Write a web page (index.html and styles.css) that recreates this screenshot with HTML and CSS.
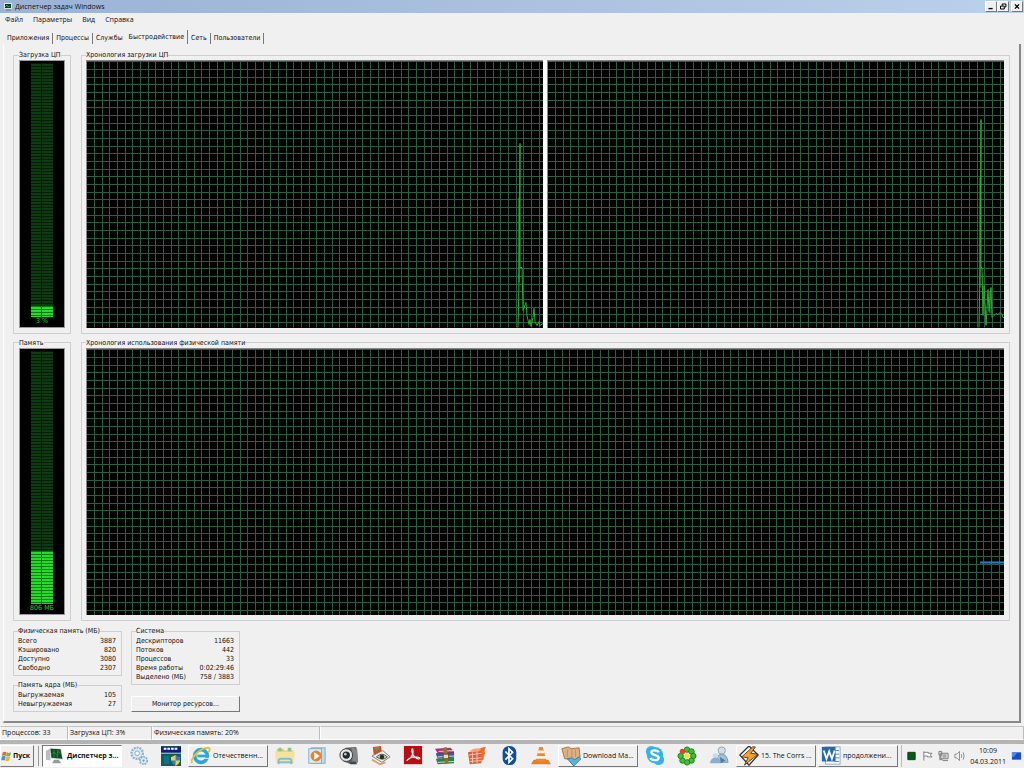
FILE: index.html
```
<!DOCTYPE html>
<html lang="ru">
<head>
	<meta charset="UTF-8">
	<title>Диспетчер задач Windows</title>
	<link rel="stylesheet" href="styles.css">
</head>
<body>

	<header class="titleBar">
		<svg class="appIcon" viewBox="0 0 8 8"><rect width="8" height="6" fill="#dde5e0"/><rect x="1" y="1" width="6" height="4" fill="#0d3b1a"/><path d="M1 4l2-2 1 2 2-1" stroke="#3c6" fill="none" stroke-width=".7"/><path d="M2 7h5" stroke="#777"/></svg>
		<h1>Диспетчер задач Windows</h1>
		<div class="winBtns">
			<button aria-label="Свернуть"><svg viewBox="0 0 12 10"><path d="M3 7.5h5" stroke="#000" stroke-width="1.6"/></svg></button>
			<button aria-label="Восстановить"><svg viewBox="0 0 12 10"><path d="M5 4V2h4.500v3.500H8M3 4.500h4.500V8H3z" fill="none" stroke="#000" stroke-width="1.200"/></svg></button>
			<button class="closeBtn" aria-label="Закрыть"><svg viewBox="0 0 12 10"><path d="M3.500 2.500l5 5m0-5l-5 5" stroke="#000" stroke-width="1.500"/></svg></button>
		</div>
	</header>

	<nav class="menu">
		<a href="#">Файл</a>
		<a href="#">Параметры</a>
		<a href="#">Вид</a>
		<a href="#">Справка</a>
	</nav>

	<nav class="tabs">
		<a href="#">Приложения</a>
		<a href="#">Процессы</a>
		<a href="#">Службы</a>
		<a href="#" class="active">Быстродействие</a>
		<a href="#">Сеть</a>
		<a href="#">Пользователи</a>
	</nav>

	<main class="panel">
		<svg class="defs" width="0" height="0">
			<defs>
				<pattern id="grid" width="23" height="23" patternUnits="userSpaceOnUse">
					<path d="M7.500 0v23M15.500 0v23M22.500 0v23M0 .5h23M0 8.500h23M0 16.500h23" stroke="#286044" fill="none"/>
				</pattern>
			</defs>
		</svg>

		<div class="row">
			<fieldset class="gaugeBox">
				<legend>Загрузка ЦП</legend>
				<div class="gauge">
					<div class="scale"><div class="level" style="height: 4%"></div></div>
					<span>3 %</span>
				</div>
			</fieldset>
			<fieldset class="chartBox">
				<legend>Хронология загрузки ЦП</legend>
				<div class="charts">
					<svg class="chart">
						<rect width="100%" height="100%" fill="url(#grid)"/>
						<svg x="100%" y="100%" overflow="visible">
							<path class="cpu" d="M-25 0L-24-45-23-184-23-60-21-60-20-17-17-25-16-12-14-3-13-8-12-1-10-10-9-19-8-6-6-2-4-6-3-2 0-4"/>
							<path class="cpu" d="M-24-45V-130"/>
						</svg>
					</svg>
					<svg class="chart">
						<rect width="100%" height="100%" fill="url(#grid)"/>
						<svg x="100%" y="100%" overflow="visible">
							<path class="cpu" d="M-25 0L-24-60-23-208-23-60-22-60-21-12-20-42-19-25-18-2-16-38-15-16-13-40-12-10-10-12-8-14-6-13-4-15-2-13-1-10 0-10"/>
							<path class="cpu" d="M-24-40V-150M-14-14V-36"/>
						</svg>
					</svg>
				</div>
			</fieldset>
		</div>

		<div class="row">
			<fieldset class="gaugeBox">
				<legend>Память</legend>
				<div class="gauge">
					<div class="scale"><div class="level" style="height: 21%"></div></div>
					<span>806 МБ</span>
				</div>
			</fieldset>
			<fieldset class="chartBox">
				<legend>Хронология использования физической памяти</legend>
				<div class="charts">
					<svg class="chart">
						<rect width="100%" height="100%" fill="url(#grid)"/>
						<svg x="100%" y="100%" overflow="visible">
							<path d="M-24-53H0" stroke="#2c7fd0" stroke-width="2"/>
						</svg>
					</svg>
				</div>
			</fieldset>
		</div>

		<div class="stats">
			<div class="col">
				<fieldset>
					<legend>Физическая память (МБ)</legend>
					<table>
						<tr><th>Всего</th><td>3887</td></tr>
						<tr><th>Кэшировано</th><td>820</td></tr>
						<tr><th>Доступно</th><td>3080</td></tr>
						<tr><th>Свободно</th><td>2307</td></tr>
					</table>
				</fieldset>
				<fieldset>
					<legend>Память ядра (МБ)</legend>
					<table>
						<tr><th>Выгружаемая</th><td>105</td></tr>
						<tr><th>Невыгружаемая</th><td>27</td></tr>
					</table>
				</fieldset>
			</div>
			<div class="col">
				<fieldset>
					<legend>Система</legend>
					<table>
						<tr><th>Дескрипторов</th><td>11663</td></tr>
						<tr><th>Потоков</th><td>442</td></tr>
						<tr><th>Процессов</th><td>33</td></tr>
						<tr><th>Время работы</th><td>0:02:29:46</td></tr>
						<tr><th>Выделено (МБ)</th><td>758 / 3883</td></tr>
					</table>
				</fieldset>
				<button class="monitor">Монитор ресурсов...</button>
			</div>
		</div>
	</main>

	<footer class="status">
		<span class="s1">Процессов: 33</span>
		<span class="s2">Загрузка ЦП: 3%</span>
		<span class="s3">Физическая память: 20%</span>
		<span class="s4"></span>
	</footer>

	<div class="taskbar">
		<button class="start">
			<svg viewBox="0 0 12 12"><path d="M2 2q2-1.500 4 0L5 6Q3 4.500 1 6z" fill="#e8632c"/><path d="M6.500 2q2 1.500 4.500 0L10 6q-2 1.200-4.500 0z" fill="#7cb342"/><path d="M1 6.500q2-1.500 4 0L4 11q-2-1.500-4 0z" fill="#4a90d9"/><path d="M5.500 6.500q2 1.500 4.500 0L9 11q-2 1.500-4.500 0z" fill="#f5b81f"/></svg>
			Пуск
		</button>
		<i class="sep"></i>

		<button class="task active">
			<svg viewBox="0 0 22 22"><path d="M1 5l5-2v13l-5-1z" fill="#b9bdbb"/><path d="M5 2l13 1 2 12-13-1z" fill="#d5dad7"/><path d="M6 3l11 .5 2 10.500L7 13z" fill="#0d4a20"/><path d="M7 9l3-2 3 3 2-4 3 3M10 4v9M14 4v9" stroke="#2f8c48" fill="none"/><path d="M10 15h5l3 4H8z" fill="#999"/></svg>
			<span>Диспетчер з...</span>
		</button>
		<a href="#" class="quick" aria-label="Службы">
			<svg viewBox="0 0 22 22"><circle cx="9" cy="8" r="6" fill="#e8f2f8" stroke="#8cb3ce" stroke-width="3" stroke-dasharray="2 1"/><circle cx="9" cy="8" r="5" fill="#d9e9f3"/><circle cx="9" cy="8" r="2.500" fill="#fff" stroke="#7fa6c3"/><circle cx="16" cy="16" r="4" fill="#dcebf4" stroke="#8cabc1" stroke-width="2" stroke-dasharray="2 1"/><circle cx="16" cy="16" r="1.200" fill="#6f98b8"/></svg>
		</a>
		<a href="#" class="quick" aria-label="Конфигурация">
			<svg viewBox="0 0 22 22"><path d="M0 0h22v22H0z" fill="#17595a"/><path d="M0 1h22v6H0z" fill="#17178c"/><path d="M3 3h16" stroke="#fff" stroke-width="2" stroke-dasharray="3 1"/><path d="M0 8h22" stroke="#c0c8e0"/><path d="M3 11h6v9H3z" fill="#0b7480"/><path d="M16 10q2 2 5 2v4q-1 4-5 6-4-2-5-6v-4q3 0 5-2z" fill="#3777c9"/><path d="M16 10v6h5q-1 4-5 6v-6h-5v-4q3 0 5-2z" fill="#efd049"/></svg>
		</a>
		<button class="task">
			<svg viewBox="0 0 22 22"><circle cx="11" cy="11" r="7" fill="none" stroke="#29a7df" stroke-width="4"/><path d="M7 11h12" stroke="#29a7df" stroke-width="3"/><path d="M13 14h9v-1h-9z" fill="#f3f3f3"/><path d="M1 19C-1 13 10 2 19 2c3 0 1 4 0 5" fill="none" stroke="#edbd34" stroke-width="2"/></svg>
			<span>Отечественн...</span>
		</button>
		<a href="#" class="quick" aria-label="Проводник">
			<svg viewBox="0 0 22 22"><path d="M2 3h7l1 2h10v14H2z" fill="#e2c468"/><path d="M4 2h3v5H4zM14 2h4v5h-4z" fill="#8ac48f"/><path d="M0 6h22l-1 11H1z" fill="#f5e39c"/><path d="M4 20v-4q0-2 3-2h8q3 0 3 2v4M4 18h14" fill="none" stroke="#80bce2" stroke-width="2"/></svg>
		</a>
		<a href="#" class="quick" aria-label="Проигрыватель">
			<svg viewBox="0 0 22 22"><rect x="5" y="2" width="15" height="17" fill="#b8dceb" stroke="#7ab1cc"/><rect x="2" y="3" width="14" height="16" fill="#d7edf5" stroke="#78abc4"/><circle cx="10" cy="11" r="6" fill="#ed812b"/><path d="M8 7l6 4-6 4z" fill="#fff"/></svg>
		</a>
		<a href="#" class="quick" aria-label="Камера">
			<svg viewBox="0 0 22 22"><path d="M7 2l12-1 2 17-8 2-8-3z" fill="#606468"/><path d="M14 2l6 1 1 14-6 2z" fill="#83878a"/><circle cx="8" cy="10" r="7" fill="#e3e5e7" stroke="#333"/><circle cx="8" cy="10" r="4" fill="#24272a"/><circle cx="7" cy="9" r="1.500" fill="#b8c4ce"/><path d="M11 18l7-1 2 3h-7z" fill="#444"/></svg>
		</a>
		<a href="#" class="quick" aria-label="Просмотр">
			<svg viewBox="0 0 22 22"><path d="M2 1l9-1 1 8-9 2z" fill="#d64826"/><path d="M3 1l3 5 4-5z" fill="#66994f"/><path d="M1 11l12-6 8 7-9 6z" fill="#efefea" stroke="#777"/><path d="M6 12q6-6 12 0-5 5-12 0z" fill="#c4cdbf" stroke="#4c5448"/><circle cx="12" cy="12" r="2.500" fill="#26331f"/><path d="M1 15l9 5 6-2" fill="none" stroke="#d9a06c" stroke-width="2"/></svg>
		</a>
		<a href="#" class="quick" aria-label="Adobe Reader">
			<svg viewBox="0 0 22 22"><rect x="1" y="0" width="20" height="20" fill="#b80f14"/><path d="M4 16c5-2 8-8 7-12-1-2-2 0-1 3 1 4 5 8 8 7 2-1-1-2-5-2-3 0-7 2-9 4z" fill="none" stroke="#fff" stroke-width="1.200"/></svg>
		</a>
		<a href="#" class="quick" aria-label="WinRAR">
			<svg viewBox="0 0 22 22"><path d="M0 3l17-1 4 4-18 2z" fill="#a43271"/><path d="M1 8l20-2v4L3 12z" fill="#8a2d63"/><path d="M1 9l20-1v5L3 14z" fill="#315db0"/><path d="M1 14l20-1v6L3 20z" fill="#298048"/><path d="M3 12l18-1M3 18l18-1M4 6l17-1" stroke="#e8e3cf"/><path d="M9 2l4-1 2 18-4 1z" fill="#8f7436"/><path d="M9 9h6v5H9z" fill="#e9dfae" stroke="#5f4820"/></svg>
		</a>
		<a href="#" class="quick" aria-label="Брандмауэр">
			<svg viewBox="0 0 22 22"><path d="M10 6Q14 1 21 1q-3 4-1 7-2 3-2 7l-4 3z" fill="#f26b20"/><path d="M1 7l14-2 1 14-13 1z" fill="#d95f3f"/><path d="M2 10l14-2M3 14l13-1M3 17l13-1M6 7v12M11 6v13" stroke="#f8cbb5"/><path d="M2 6q6-5 14-3l-3 3z" fill="#f6a37b"/></svg>
		</a>
		<a href="#" class="quick" aria-label="Bluetooth">
			<svg viewBox="0 0 22 22"><rect x="4" y="0" width="15" height="21" rx="7" fill="#124e90"/><path d="M7 6l8 8-4 4V3l4 4-8 8" fill="none" stroke="#fff" stroke-width="1.800"/></svg>
		</a>
		<a href="#" class="quick" aria-label="VLC">
			<svg viewBox="0 0 22 22"><path d="M3 15h16l3 5H0z" fill="#e67f20"/><path d="M9 1h4l4 15q-6 3-12 0z" fill="#f08a27"/><path d="M8 5h6l1 3H7zM6 11h10l1 3H5z" fill="#f6f2eb"/></svg>
		</a>
		<button class="task">
			<svg viewBox="0 0 22 22"><path d="M1 3l7-2 3 2 9-1 1 10-5 3-12-1z" fill="#ddb083" stroke="#a5713f"/><path d="M7 4v8M12 4v8M16 4v8" stroke="#bf8c5c"/><path d="M7 14l5-1 3 2 5-3 2 2-8 8z" fill="#58b5df" stroke="#307ca8"/></svg>
			<span>Download Ma...</span>
		</button>
		<a href="#" class="quick" aria-label="Skype">
			<svg viewBox="0 0 22 22"><circle cx="7" cy="6" r="6" fill="#35b2e9"/><circle cx="15" cy="15" r="6" fill="#35b2e9"/><circle cx="11" cy="10" r="9" fill="#35b2e9"/><path d="M15 7c-1-3-8-3-8 0 0 4 8 2 8 6 0 4-8 3-9 0" fill="none" stroke="#fff" stroke-width="2.500"/></svg>
		</a>
		<a href="#" class="quick" aria-label="ICQ">
			<svg viewBox="0 0 22 22"><g fill="#43bd35" stroke="#16811a"><circle cx="11" cy="4" r="3"/><circle cx="16" cy="6" r="3"/><circle cx="18" cy="11" r="3"/><circle cx="16" cy="16" r="3"/><circle cx="11" cy="18" r="3"/><circle cx="6" cy="16" r="3"/><circle cx="4" cy="11" r="3"/></g><circle cx="6" cy="6" r="3" fill="#da4935"/><circle cx="11" cy="11" r="3" fill="#f4df48"/></svg>
		</a>
		<a href="#" class="quick" aria-label="Контакты">
			<svg viewBox="0 0 22 22"><circle cx="14" cy="5" r="4" fill="#d2dfe7" stroke="#8da3b1"/><path d="M8 18q0-9 6-9t7 9z" fill="#a4bfd1" stroke="#7797ab"/><circle cx="7" cy="11" r="3" fill="#c6dae7"/><path d="M1 19q1-6 6-6t6 6z" fill="#89afca"/><path d="M12 12l6 4-5 3z" fill="#477eaf"/></svg>
		</a>
		<button class="task">
			<svg viewBox="0 0 22 22"><path d="M11 0l10 10-10 11L1 10z" fill="#fff" stroke="#333" stroke-width="1.500"/><path d="M15 1L3 12l7 1-4 8L21 9l-8-1 5-7z" fill="#f3a12e" stroke="#52361c"/></svg>
			<span>15. The Corrs ...</span>
		</button>
		<button class="task">
			<svg viewBox="0 0 22 22"><rect x="5" y="1" width="16" height="19" fill="#f7fafd" stroke="#8da9c8"/><path d="M15 5h5M15 9h5M15 13h5M15 17h5" stroke="#5080b4"/><path d="M1 1h15v16H1z" fill="#2767ae"/><path d="M3 5l3 9 3-8 3 8 3-9" fill="none" stroke="#fff" stroke-width="2"/></svg>
			<span>продолжени...</span>
		</button>

		<div class="tray">
			<svg viewBox="0 0 12 12"><path d="M2 2h8v8H2z" fill="#075916" stroke="#0b3812"/></svg>
			<svg viewBox="0 0 12 12"><path d="M2 1v10M2 2h5v1h4L9 5l2 2H6V6H2" fill="#fff" stroke="#777"/></svg>
			<svg viewBox="0 0 12 12"><path d="M3 3h8v6H3zM5 11h6M1 1h3v4H1zM2 5v5h3" fill="#ddd" stroke="#777"/><path d="M5 5h4M5 7h4" stroke="#777"/></svg>
			<svg viewBox="0 0 12 12"><path d="M1 4h2l3-3v10L3 8H1zM8 4q1 2 0 4M10 2q2 4 0 8" fill="none" stroke="#888"/></svg>
			<time datetime="2011-03-04T10:09">10:09<br>04.03.2011</time>
			<svg viewBox="0 0 12 12"><path d="M1 2h10v8H1z" fill="#1a4dc4"/><path d="M1 2h6L3 7H1z" fill="#5488e8"/></svg>
		</div>
	</div>

</body>
</html>
```

FILE: styles.css
```
*{
	margin :0;
	padding :0;
	box-sizing: border-box;
}
body{
	display: flex;
	flex-direction: column;
	min-height: 100vh;
	background: #f0f0f0;
	color :#111;
	font: 7px/9px "DejaVu Sans Condensed", "DejaVu Sans", sans-serif;
}
a{
	color :inherit;
	text-decoration: none;
}
button{
	font: inherit;
	color :inherit;
	background: #f0f0f0;
	border: 1px solid;
	border-color: #fff #777 #777 #fff;
}
svg{
	display: block;
	flex: none;
}
.defs{
	position: absolute;
}

/* title and menu */
.titleBar, .menu, .status, .taskbar{
	font: 7px/12px "Open Sans", sans-serif;
}
.titleBar{
	display: flex;
	align-items: center;
	height: 13px;
	padding: 0 1px 0 4px;
	gap: 3px;
	background: linear-gradient(90deg, #9ab2d4, #b9d1ea);
}
.titleBar h1{
	flex: 1;
	font: inherit;
}
.appIcon{
	width: 8px;
	height: 8px;
}
.winBtns{
	display: flex;
}
.winBtns button{
	width: 12px;
	height: 11px;
}
.winBtns svg{
	width: 100%;
	height: 100%;
}
.winBtns .closeBtn{
	margin-left: 2px;
}
.menu{
	display: flex;
	gap: 10px;
	padding: 1px 5px;
}

/* tabs */
.tabs{
	display: flex;
	align-items: flex-end;
	height: 17px;
	padding-left: 4px;
}
.tabs a{
	padding: 0 3px;
	line-height: 11px;
	border-right: 1px solid #777;
}
.tabs a:nth-child(3){
	border-right: 0;
}
.tabs .active{
	line-height: 14px;
}
.panel{
	flex: 1;
	display: flex;
	flex-direction: column;
	gap: 4px;
	margin: 0 3px;
	padding: 6px 9px 9px;
	border: 1px solid;
	border-color: #fff #888 #888 #fff;
	border-width: 0 2px 2px 1px;
}
.row{
	flex: 1;
	display: flex;
	gap: 10px;
}
fieldset{
	min-width: 0;
	padding: 0 5px 5px;
	border: 1px solid #cfcfcf;
}
legend{
	line-height: 10px;
	white-space: nowrap;
}
.gaugeBox{
	width: 58px;
}
.chartBox{
	flex: 1;
	padding: 0 5px 5px 4px;
}
.gauge{
	display: flex;
	flex-direction: column;
	align-items: center;
	height: 100%;
	padding: 2px 0 1px;
	border: 1px solid #999;
	background: #000;
	color :#2bd32b;
}
.scale{
	flex: 1;
	display: flex;
	align-items: flex-end;
	width: 22px;
	background: linear-gradient(90deg, transparent 10px, #041a06 10px, #041a06 11px, transparent 11px), repeating-linear-gradient(#041a06 0, #041a06 1px, #0c3d10 1px, #0c3d10 3px);
}
.level{
	width: 100%;
	background: linear-gradient(90deg, transparent 10px, #063 10px, #063 11px, transparent 11px), repeating-linear-gradient(#0a7a12 0, #0a7a12 1px, #22dc28 1px, #22dc28 3px);
}
.charts{
	display: flex;
	gap: 4px;
	height: 100%;
	background: #fff;
}
.chart{
	flex: 1;
	width: 0;
	height: 100%;
	background: #000;
	border: 1px solid #888;
	border-width: 1px 0 0 1px;
}
.cpu{
	fill: none;
	stroke: #27b52b;
}

/* counters */
.stats{
	display: flex;
	gap: 9px;
	margin-top: 1px;
}
.col{
	display: flex;
	flex-direction: column;
	justify-content: space-between;
	width: 109px;
	height: 86px;
}
.col fieldset{
	padding: 1px 5px 2px 4px;
}
table{
	width: 100%;
	border-collapse: collapse;
}
th{
	font-weight: normal;
	text-align: left;
}
td{
	text-align: right;
}
.monitor{
	height: 16px;
}

.status{
	display: flex;
	height: 18px;
	margin-top: 3px;
	border-bottom: 4px solid #b4b4b4;
}
.status span{
	padding: 0 1px;
	border: 1px solid;
	border-color: #c4c4c4 #bbb #fff #fff;
}
.s1{
	width: 68px;
}
.s2{
	width: 84px;
}
.s3{
	width: 168px;
}
.s4{
	flex: 1;
}

/* taskbar */
.taskbar{
	display: flex;
	align-items: center;
	gap: 2px;
	height: 24px;
}
.start{
	display: flex;
	align-items: center;
	gap: 1px;
	width: 34px;
	height: 22px;
	font-weight: bold;
}
.start svg{
	width: 11px;
	height: 12px;
}
.sep{
	width: 1px;
	height: 20px;
	margin: 0 1px 0 2px;
	background: #999;
}
.task{
	display: flex;
	align-items: center;
	gap: 2px;
	width: 80px;
	height: 22px;
	padding: 0 2px;
	white-space: nowrap;
}
.task.active{
	background: #fff;
	border-color: #777 #fff #fff #777;
	font-weight: bold;
}
.task svg, .quick svg{
	width: 20px;
	height: 20px;
}
.quick{
	width: 30px;
	padding-left: 5px;
}
.tray{
	flex: 1;
	display: flex;
	align-items: center;
	justify-content: space-between;
	padding: 0 2px 0 4px;
	margin-left: 1px;
	border-left: 1px solid #bbb;
}
.tray svg{
	width: 11px;
	height: 12px;
}
.tray time{
	line-height: 11px;
	text-align: center;
}
```
